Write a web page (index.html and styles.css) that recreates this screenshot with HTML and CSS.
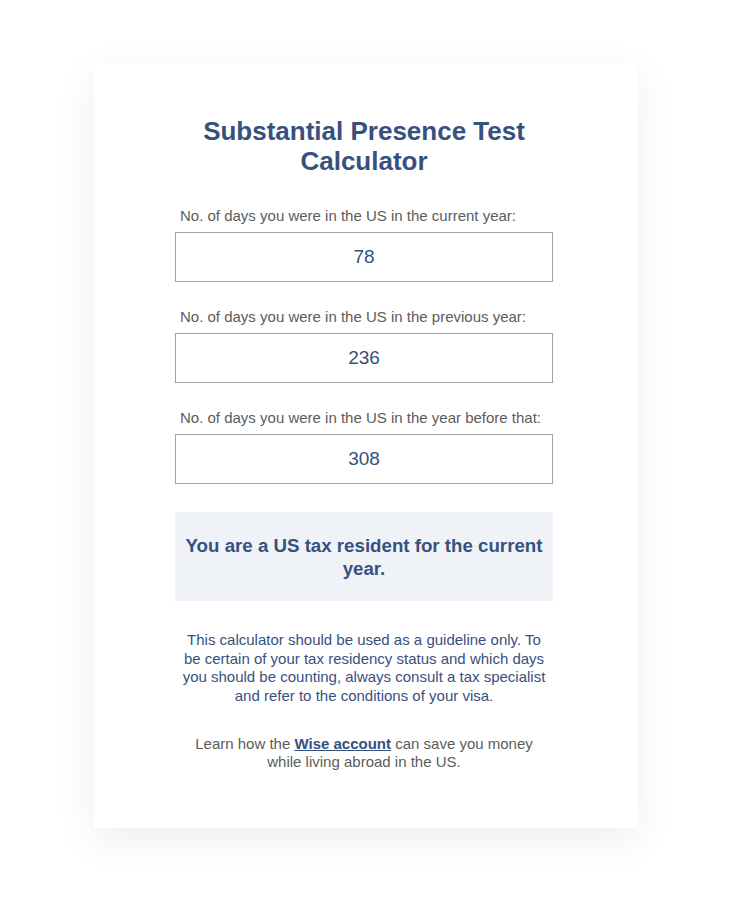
FILE: index.html
```html
<!DOCTYPE html>
<html lang="en">
<head>
<meta charset="utf-8">
<title>Substantial Presence Test Calculator</title>
<link rel="stylesheet" href="styles.css">
</head>
<body>
<main class="page">
  <section class="card">
    <h1 class="title">Substantial Presence Test Calculator</h1>
    <div class="field">
      <label class="label" for="d1">No. of days you were in the US in the current year:</label>
      <input class="input" id="d1" type="text" value="78">
    </div>
    <div class="field">
      <label class="label" for="d2">No. of days you were in the US in the previous year:</label>
      <input class="input" id="d2" type="text" value="236">
    </div>
    <div class="field">
      <label class="label" for="d3">No. of days you were in the US in the year before that:</label>
      <input class="input" id="d3" type="text" value="308">
    </div>
    <div class="result">You are a US tax resident for the current year.</div>
    <p class="note">This calculator should be used as a guideline only. To be certain of your tax residency status and which days you should be counting, always consult a tax specialist and refer to the conditions of your visa.</p>
    <p class="promo">Learn how the <a class="link" href="#">Wise account</a> can save you money while living abroad in the US.</p>
  </section>
</main>
</body>
</html>
```

FILE: styles.css
```css
* { box-sizing: border-box; }
html, body {
  margin: 0;
  padding: 0;
  background: #ffffff;
  font-family: "Liberation Sans", Arial, Helvetica, sans-serif;
}
.page {
  padding: 64px 94px 0 94px;
  height: 906px;
}
.card {
  width: 544px;
  height: 764px;
  background: #ffffff;
  box-shadow: 0 12px 40px rgba(0, 0, 0, 0.07);
  padding: 52px 85px 0 81px;
  display: flex;
  flex-direction: column;
}
.title {
  margin: 0 0 31px 0;
  font-size: 26px;
  line-height: 30px;
  font-weight: bold;
  color: #37517e;
  text-align: center;
  padding: 0 10px;
}
.field {
  display: flex;
  flex-direction: column;
  margin-bottom: 26px;
}
.label {
  font-size: 15px;
  line-height: 18px;
  color: #5c5c5c;
  padding-left: 5px;
  margin-bottom: 7px;
  white-space: nowrap;
}
.input {
  width: 378px;
  height: 50px;
  border: 1px solid #a3a3a3;
  border-radius: 0;
  font-family: inherit;
  font-size: 19px;
  color: #37517e;
  text-align: center;
  padding: 0;
  outline: none;
  background: #fff;
}
.result {
  margin-top: 2px;
  width: 378px;
  background: #eff3f8;
  color: #37517e;
  font-size: 18.7px;
  line-height: 23px;
  font-weight: bold;
  text-align: center;
  padding: 22px 5px 21px;
}
.note {
  margin: 30px 0 0 0;
  width: 378px;
  padding: 0 5px;
  font-size: 15px;
  line-height: 18.7px;
  color: #37517e;
  text-align: center;
}
.promo {
  margin: 29px 0 0 0;
  width: 378px;
  padding: 0 5px;
  font-size: 15px;
  line-height: 18px;
  color: #5c5c5c;
  text-align: center;
}
.link {
  color: #37517e;
  font-weight: bold;
  text-decoration: underline;
}
```
